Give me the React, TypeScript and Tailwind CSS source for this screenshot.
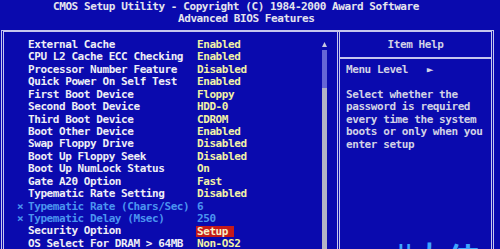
import React from "react";

type Row = { label: string; value: string; locked?: boolean; active?: boolean };

const rows: Row[] = [
  { label: "External Cache", value: "Enabled" },
  { label: "CPU L2 Cache ECC Checking", value: "Enabled" },
  { label: "Processor Number Feature", value: "Disabled" },
  { label: "Quick Power On Self Test", value: "Enabled" },
  { label: "First Boot Device", value: "Floppy" },
  { label: "Second Boot Device", value: "HDD-0" },
  { label: "Third Boot Device", value: "CDROM" },
  { label: "Boot Other Device", value: "Enabled" },
  { label: "Swap Floppy Drive", value: "Disabled" },
  { label: "Boot Up Floppy Seek", value: "Disabled" },
  { label: "Boot Up NumLock Status", value: "On" },
  { label: "Gate A20 Option", value: "Fast" },
  { label: "Typematic Rate Setting", value: "Disabled" },
  { label: "Typematic Rate (Chars/Sec)", value: "6", locked: true },
  { label: "Typematic Delay (Msec)", value: "250", locked: true },
  { label: "Security Option", value: "Setup", active: true },
  { label: "OS Select For DRAM > 64MB", value: "Non-OS2" },
];

const help = [
  "Select whether the",
  "password is required",
  "every time the system",
  "boots or only when you",
  "enter setup",
];

const SettingRow = ({ row }: { row: Row }) => (
  <div className="flex h-[12.45px] whitespace-pre">
    <span className="w-[24px] pl-[13px] text-[#4a94f0]">{row.locked ? "×" : ""}</span>
    <span className={`w-[169px] ${row.locked ? "text-[#4a94f0]" : "text-[#eeeef6]"}`}>
      {row.label}
    </span>
    {row.active ? (
      <span className="-ml-[1px] mt-[1px] inline-block h-[11px] bg-[#c41a1a] pl-[1px] pr-[6px] leading-[11px] text-[#f8f0c8]">
        {row.value}
      </span>
    ) : (
      <span className={row.locked ? "text-[#4a94f0]" : "text-[#f2f2a6]"}>{row.value}</span>
    )}
  </div>
);

const App = () => {
  return (
    <div className="relative h-[249px] w-[500px] overflow-hidden bg-[#0a0aae] font-['DejaVu_Sans_Mono',monospace] text-[11px] font-bold leading-[12.45px] tracking-[-0.42px]">
      <div className="pt-[1px] text-[#e4e4ee]">
        <p className="whitespace-pre pl-[53px]">
          CMOS Setup Utility - Copyright (C) 1984-2000 Award Software
        </p>
        <p className="whitespace-pre pl-[178px]">Advanced BIOS Features</p>
      </div>

      <div className="ml-[1px] mt-[4px] flex h-[260px] w-[493px] border-x-[3px] border-t-2 border-double border-[#c6c6ee]">
        <div className="w-[318px] pt-[7px]">
          {rows.map((row) => (
            <SettingRow key={row.label} row={row} />
          ))}
        </div>

        <div className="flex w-[5px] flex-col pt-[10px]">
          <svg width="5" height="5" viewBox="0 0 5 5">
            <path d="M2.5 0 L5 5 L0 5 Z" fill="#c8c8e0" />
          </svg>
          <div className="mt-[3px] h-[38px] bg-[#6666d6]" />
          <div className="flex-1 bg-[#b2b2c6]" />
        </div>

        <div className="ml-[10px] w-[154px] border-l-[3px] border-double border-[#c6c6ee] pt-[7px] text-[#d2d2e6]">
          <p className="text-center">Item Help</p>
          <div className="flex h-[12.45px] items-center">
            <div className="h-[2px] w-full bg-[#c6c6ee]" />
          </div>
          <p className="whitespace-pre pl-[6px]">Menu Level   ►</p>
          <div className="h-[12.45px]" />
          {help.map((line) => (
            <p key={line} className="whitespace-pre pl-[6px]">
              {line}
            </p>
          ))}
        </div>
      </div>

      <div className="absolute left-[398px] top-[241px] flex items-start font-['Noto_Sans_CJK_SC',sans-serif] font-bold leading-none tracking-normal text-[#3ea4ff]">
        <span className="text-[18px]">U</span>
        <span className="ml-[4px] text-[28px]">大</span>
        <span className="ml-[4px] text-[32px]">侠</span>
      </div>
    </div>
  );
};

export default App;
